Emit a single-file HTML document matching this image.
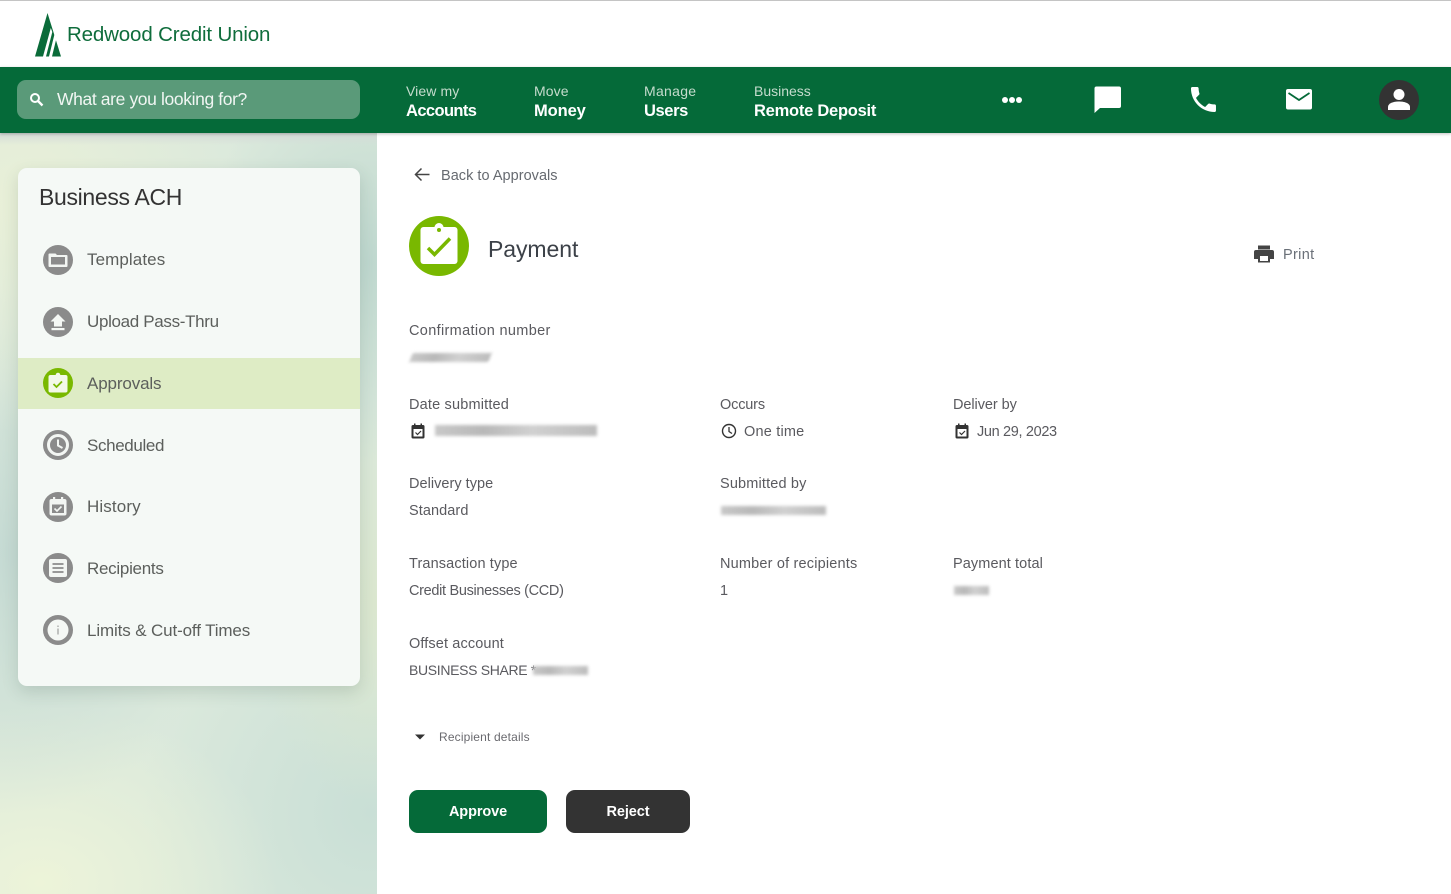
<!DOCTYPE html>
<html lang="en"><head><meta charset="utf-8"><title>Payment</title>
<style>
html,body{margin:0;padding:0}
body{width:1451px;height:894px;position:relative;overflow:hidden;background:#fff;font-family:"Liberation Sans",sans-serif;color:#555}
.t{position:absolute;white-space:nowrap;line-height:20px;height:20px}
.a{position:absolute}
.l{font-size:14.5px;letter-spacing:.12px;color:#5a5a5f}
.n1{font-size:14px;color:#c5dccd;letter-spacing:.05px}
.n2{font-size:16.5px;font-weight:bold;color:#fff;letter-spacing:-.3px}
.m{font-size:17px;color:#5c5f5c}
.b{position:absolute;filter:blur(1.5px);background:linear-gradient(90deg,#c8c8c8,#b8b8b8 30%,#d0d0d0 60%,#bcbcbc)}
svg{position:absolute;overflow:visible}
</style></head><body>
<div class="a" style="left:0;top:0;width:1451px;height:1px;background:#c4c4c4"></div>
<svg style="left:34px;top:12px" width="28" height="46" viewBox="0 0 28 46"><path d="M13.500 1 L27 44.500 L1 44.500Z" fill="#0a6b39"/><path d="M16.800 16 L9 44.500 L12 44.500 L18.300 20Z" fill="#fff"/><path d="M20.800 21 L15 44.500 L18 44.500 L22.500 26Z" fill="#fff"/></svg>
<div class="t" style="left:67px;top:25px;font-size:20.500px;color:#0f6d3c;letter-spacing:-.15px">Redwood Credit Union</div>

<div class="a" style="left:0;top:133px;width:377px;height:761px;background:
 linear-gradient(#d5dbd8,rgba(213,219,216,0) 12px),
 radial-gradient(ellipse 230px 230px at 20px 70px,#e9f0d8,rgba(233,240,216,0)),
 radial-gradient(ellipse 170px 200px at 370px 130px,#bfd8cf,rgba(191,216,207,0)),
 radial-gradient(ellipse 220px 260px at 10px 420px,#c5dad3,rgba(197,218,211,0)),
 radial-gradient(ellipse 120px 200px at 375px 470px,#dbe7cf,rgba(219,231,207,0)),
 radial-gradient(ellipse 240px 180px at 40px 750px,#edf4d9,rgba(237,244,217,0)),
 radial-gradient(ellipse 230px 240px at 370px 680px,#c9dfd6,rgba(201,223,214,0)),
 #dbe9dc"></div>

<div class="a" style="left:0;top:67px;width:1451px;height:65.500px;background:#056a39;box-shadow:0 1px 3px rgba(0,0,0,.25)"></div>
<div class="a" style="left:17px;top:80px;width:343px;height:38.500px;border-radius:9px;background:#5a9a79"></div>
<svg style="left:29px;top:92px" width="15" height="15" viewBox="0 0 15 15"><circle cx="6" cy="6" r="4" fill="none" stroke="#fff" stroke-width="2"/><path d="M9 9 L13.500 13.500" stroke="#fff" stroke-width="2.300"/></svg>
<div class="t" style="left:57px;top:89px;font-size:17.500px;color:#f1f6f3;letter-spacing:-.38px">What are you looking for?</div>

<div class="t n1" style="left:406px;top:81px;letter-spacing:.1px">View my</div><div class="t n2" style="left:406px;top:101px;letter-spacing:-.6px">Accounts</div>
<div class="t n1" style="left:534px;top:81px;letter-spacing:.1px">Move</div><div class="t n2" style="left:534px;top:101px;letter-spacing:-.1px">Money</div>
<div class="t n1" style="left:644px;top:81px;letter-spacing:.3px">Manage</div><div class="t n2" style="left:644px;top:101px;letter-spacing:-.4px">Users</div>
<div class="t n1" style="left:754px;top:81px;letter-spacing:0">Business</div><div class="t n2" style="left:754px;top:101px;letter-spacing:-.25px">Remote Deposit</div>

<svg style="left:1001px;top:95px" width="22" height="10"><circle cx="4" cy="5" r="3" fill="#fff"/><circle cx="11" cy="5" r="3" fill="#fff"/><circle cx="18" cy="5" r="3" fill="#fff"/></svg>
<svg style="left:1094px;top:86px" width="28" height="28" viewBox="0 0 28 28"><path d="M2.500 0.500 H25 A2 2 0 0 1 27 2.500 V20 A2 2 0 0 1 25 22 H6 L0.500 27 V2.500 A2 2 0 0 1 2.500 0.500Z" fill="#fff"/></svg>
<svg style="left:1191px;top:87px" width="25" height="25" viewBox="3 3 18 18"><path d="M6.600 10.800c1.440 2.830 3.760 5.140 6.590 6.590l2.200-2.200c.27-.27.67-.36 1.020-.24 1.120.37 2.330.57 3.570.57.550 0 1 .45 1 1V20c0 .55-.45 1-1 1-9.390 0-17-7.610-17-17 0-.55.450-1 1-1h3.500c.55 0 1 .45 1 1 0 1.250.2 2.450.57 3.570.11.350.03.740-.25 1.020l-2.200 2.210z" fill="#fff"/></svg>
<svg style="left:1286px;top:89px" width="26" height="21" viewBox="0 0 26 21"><rect width="26" height="20.500" rx="2" fill="#fff"/><path d="M2.500 4 L13 11 L23.500 4" fill="none" stroke="#056a39" stroke-width="1.800"/></svg>
<svg style="left:1379px;top:80px" width="40" height="40" viewBox="0 0 40 40"><circle cx="20" cy="20" r="20" fill="#333"/><circle cx="20" cy="14.500" r="5.500" fill="#fff"/><path d="M9 30 V27 C9 23 15 21.500 20 21.500 C25 21.500 31 23 31 27 V30Z" fill="#fff"/></svg>

<div class="a" style="left:18px;top:168px;width:341.500px;height:518px;border-radius:9px;background:#f5f9f6;box-shadow:0 6px 16px rgba(60,90,80,.18)"></div>
<div class="a" style="left:18px;top:358px;width:341.500px;height:51px;background:#deecc5"></div>
<div class="t" style="left:39px;top:187px;font-size:23px;letter-spacing:-.33px;color:#333">Business ACH</div>

<div class="t m" style="left:87px;top:250px;letter-spacing:.09px">Templates</div>
<div class="t m" style="left:87px;top:312px;letter-spacing:-.33px">Upload Pass-Thru</div>
<div class="t m" style="left:87px;top:374px;letter-spacing:-.13px">Approvals</div>
<div class="t m" style="left:87px;top:436px;letter-spacing:-.36px">Scheduled</div>
<div class="t m" style="left:87px;top:497px;letter-spacing:.12px">History</div>
<div class="t m" style="left:87px;top:559px;letter-spacing:-.28px">Recipients</div>
<div class="t m" style="left:87px;top:621px;letter-spacing:-.13px">Limits &amp; Cut-off Times</div>

<svg style="left:43px;top:245px" width="30" height="30" viewBox="0 0 30 30"><circle cx="15" cy="15" r="15" fill="#8b8b8b"/><path d="M6.500 8.500 H12.500 L14 10 H23.500 A1 1 0 0 1 24.500 11 V21 A1 1 0 0 1 23.500 22 H6.500 A1 1 0 0 1 5.500 21 V9.500 A1 1 0 0 1 6.500 8.500Z" fill="#f3f6f3"/><rect x="8" y="12" width="14" height="7.500" fill="#8b8b8b"/></svg>
<svg style="left:43px;top:307px" width="30" height="30" viewBox="0 0 30 30"><circle cx="15" cy="15" r="15" fill="#8b8b8b"/><path d="M15 7 L22.500 14.500 H19 V19.500 H11 V14.500 H7.500Z" fill="#f5f8f5"/><rect x="8.500" y="21" width="13" height="2.200" fill="#f5f8f5"/></svg>
<svg style="left:43px;top:368px" width="30" height="30" viewBox="0 0 30 30"><circle cx="15" cy="15" r="15" fill="#79b800"/><rect x="5.500" y="7" width="19" height="17.500" rx="2" fill="#f3f8e8"/><circle cx="15" cy="7" r="2.300" fill="#f3f8e8"/><path d="M10.500 16 L13.500 19 L19 13.500" fill="none" stroke="#79b800" stroke-width="1.800"/></svg>
<svg style="left:43px;top:430px" width="30" height="30" viewBox="0 0 30 30"><circle cx="15" cy="15" r="15" fill="#8b8b8b"/><circle cx="15" cy="15" r="9.500" fill="none" stroke="#f3f6f3" stroke-width="3"/><path d="M15 9.500 V15.500 L19.500 18" fill="none" stroke="#f3f6f3" stroke-width="2"/></svg>
<svg style="left:43px;top:492px" width="30" height="30" viewBox="0 0 30 30"><circle cx="15" cy="15" r="15" fill="#8b8b8b"/><rect x="6.500" y="7" width="17" height="16.500" rx="2" fill="#f3f6f3"/><rect x="10" y="5" width="2.200" height="4" fill="#f3f6f3"/><rect x="18" y="5" width="2.200" height="4" fill="#f3f6f3"/><rect x="9" y="12.500" width="12" height="8.500" fill="#8b8b8b"/><path d="M11.500 16.500 L14 19 L18.500 14.500" fill="none" stroke="#f3f6f3" stroke-width="1.600"/></svg>
<svg style="left:43px;top:553px" width="30" height="30" viewBox="0 0 30 30"><circle cx="15" cy="15" r="15" fill="#8b8b8b"/><rect x="6" y="6" width="18" height="18" rx="2" fill="#f3f6f3"/><path d="M9.500 11 H20.500 M9.500 15 H20.500 M9.500 19 H20.500" stroke="#8b8b8b" stroke-width="1.700"/></svg>
<svg style="left:43px;top:615px" width="30" height="30" viewBox="0 0 30 30"><circle cx="15" cy="15" r="15" fill="#8b8b8b"/><circle cx="15" cy="15" r="10.500" fill="#f5f8f5"/><rect x="14.300" y="13.500" width="1.400" height="6" fill="#aaa"/><rect x="14.300" y="10.500" width="1.400" height="1.500" fill="#aaa"/></svg>

<svg style="left:414px;top:167px" width="16" height="15" viewBox="0 0 16 15"><path d="M15.500 7.500 H2 M7.500 1.500 L1.500 7.500 L7.500 13.500" fill="none" stroke="#444" stroke-width="1.500"/></svg>
<div class="t l" style="left:441px;top:166px;color:#666a70;letter-spacing:.03px">Back to Approvals</div>

<svg style="left:409px;top:216px" width="60" height="60" viewBox="0 0 60 60"><circle cx="30" cy="30" r="30" fill="#79b800"/><rect x="11.500" y="11" width="37" height="37" rx="3" fill="#fff"/><circle cx="30" cy="11.500" r="4.500" fill="#fff"/><circle cx="30" cy="14" r="2" fill="#79b800"/><path d="M19 32 L25.500 38.500 L41 22.500" fill="none" stroke="#79b800" stroke-width="3.500"/></svg>
<div class="t" style="left:488px;top:239px;font-size:23px;letter-spacing:-.07px;color:#3c4148">Payment</div>

<svg style="left:1254px;top:245px" width="20" height="18" viewBox="0 0 20 18"><rect x="4" y="0.500" width="12" height="4" fill="#444"/><path d="M2 5 H18 A2 2 0 0 1 20 7 V14 H16 V17.500 H4 V14 H0 V7 A2 2 0 0 1 2 5Z" fill="#444"/><rect x="6" y="11" width="8" height="5" fill="#fff"/></svg>
<div class="t l" style="left:1283px;top:245px;color:#6a7078;letter-spacing:.33px">Print</div>

<div class="t l" style="left:409px;top:321px;letter-spacing:.33px">Confirmation number</div>
<div class="b" style="left:411px;top:353px;width:79px;height:9px;transform:skewX(-20deg)"></div>

<div class="t l" style="left:409px;top:395px;letter-spacing:.18px">Date submitted</div>
<svg style="left:411px;top:423px" width="14" height="16" viewBox="0 0 14 16"><path d="M2 2 H12 A1.500 1.500 0 0 1 13.500 3.500 V14 A1.500 1.500 0 0 1 12 15.500 H2 A1.500 1.500 0 0 1 .5 14 V3.500 A1.500 1.500 0 0 1 2 2Z" fill="#333"/><rect x="3" y="0.500" width="1.500" height="3" fill="#333"/><rect x="9.500" y="0.500" width="1.500" height="3" fill="#333"/><rect x="2.500" y="6" width="9" height="7.500" fill="#fff"/><path d="M4.500 9.500 L6.500 11.500 L10 8" fill="none" stroke="#333" stroke-width="1.200"/></svg>
<div class="b" style="left:435px;top:425px;width:162px;height:11px"></div>

<div class="t l" style="left:720px;top:395px;letter-spacing:-.17px">Occurs</div>
<svg style="left:721px;top:423px" width="16" height="16" viewBox="0 0 16 16"><circle cx="8" cy="8" r="6.500" fill="none" stroke="#333" stroke-width="1.400"/><path d="M8 4 V8.500 L11 10.500" fill="none" stroke="#333" stroke-width="1.300"/></svg>
<div class="t l" style="left:744px;top:422px;letter-spacing:.2px">One time</div>

<div class="t l" style="left:953px;top:395px;letter-spacing:-.07px">Deliver by</div>
<svg style="left:955px;top:423px" width="14" height="16" viewBox="0 0 14 16"><path d="M2 2 H12 A1.500 1.500 0 0 1 13.500 3.500 V14 A1.500 1.500 0 0 1 12 15.500 H2 A1.500 1.500 0 0 1 .5 14 V3.500 A1.500 1.500 0 0 1 2 2Z" fill="#333"/><rect x="3" y="0.500" width="1.500" height="3" fill="#333"/><rect x="9.500" y="0.500" width="1.500" height="3" fill="#333"/><rect x="2.500" y="6" width="9" height="7.500" fill="#fff"/><path d="M4.500 9.500 L6.500 11.500 L10 8" fill="none" stroke="#333" stroke-width="1.200"/></svg>
<div class="t l" style="left:977px;top:422px;letter-spacing:-.34px">Jun 29, 2023</div>

<div class="t l" style="left:409px;top:474px;letter-spacing:.03px">Delivery type</div>
<div class="t l" style="left:409px;top:501px;letter-spacing:.08px">Standard</div>
<div class="t l" style="left:720px;top:474px;letter-spacing:.16px">Submitted by</div>
<div class="b" style="left:721px;top:506px;width:105px;height:9px"></div>

<div class="t l" style="left:409px;top:554px;letter-spacing:.13px">Transaction type</div>
<div class="t l" style="left:409px;top:581px;letter-spacing:-.32px">Credit Businesses (CCD)</div>
<div class="t l" style="left:720px;top:554px;letter-spacing:.18px">Number of recipients</div>
<div class="t l" style="left:720px;top:581px">1</div>
<div class="t l" style="left:953px;top:554px;letter-spacing:.1px">Payment total</div>
<div class="b" style="left:954px;top:586px;width:35px;height:9px"></div>

<div class="t l" style="left:409px;top:634px;letter-spacing:.12px">Offset account</div>
<div class="t l" style="left:409px;top:660px;font-size:14px;letter-spacing:-.33px">BUSINESS SHARE *</div>
<div class="b" style="left:533px;top:666px;width:55px;height:9px"></div>

<svg style="left:415px;top:734px" width="10" height="6"><path d="M0 0.500 H10 L5 5.500Z" fill="#333"/></svg>
<div class="t" style="left:439px;top:727px;font-size:12px;letter-spacing:.16px;color:#6a6a6f">Recipient details</div>

<div class="a" style="left:409px;top:790px;width:138px;height:42.500px;border-radius:9px;background:#056a39"></div>
<div class="t" style="left:409px;top:802px;width:138px;text-align:center;font-size:14.500px;font-weight:bold;color:#fff;letter-spacing:-.1px">Approve</div>
<div class="a" style="left:566px;top:790px;width:124px;height:42.500px;border-radius:9px;background:#333"></div>
<div class="t" style="left:566px;top:802px;width:124px;text-align:center;font-size:14.500px;font-weight:bold;color:#fff;letter-spacing:-.1px">Reject</div>
</body></html>
